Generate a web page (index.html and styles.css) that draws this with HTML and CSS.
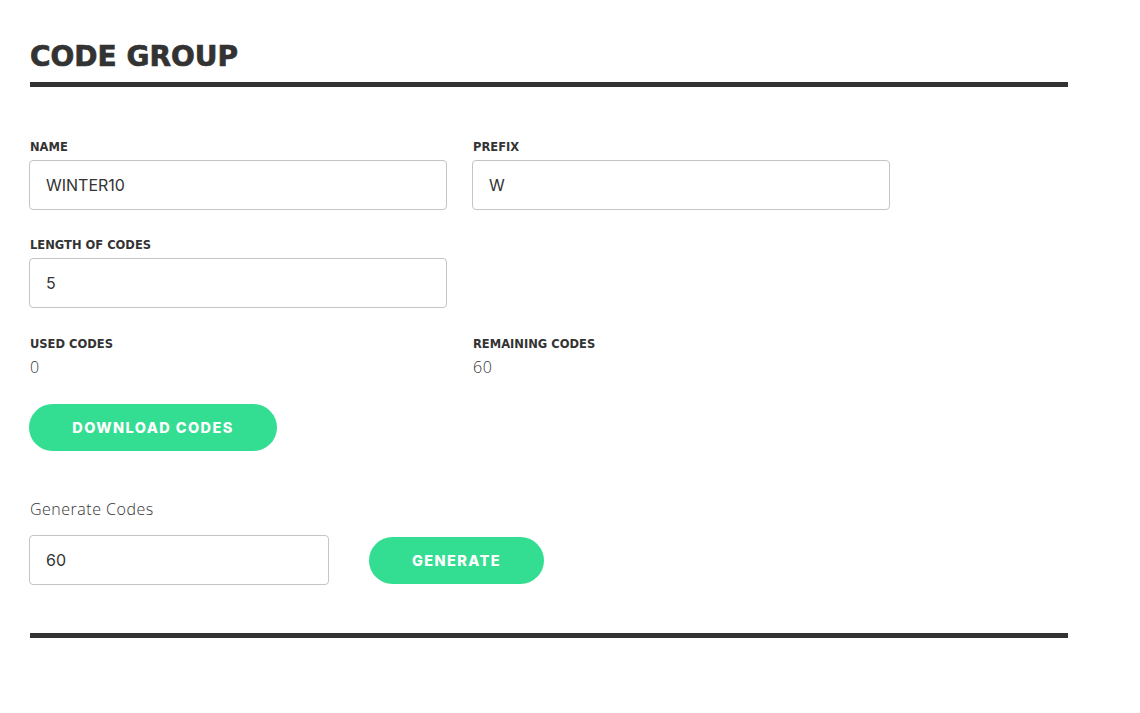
FILE: index.html
```html
<!DOCTYPE html>
<html>
<head>
<meta charset="utf-8">
<link rel="stylesheet" href="styles.css">
</head>
<body>
<div class="page">
  <h1 class="title">CODE GROUP</h1>
  <div class="rule"></div>
  <div class="form">
    <div class="grid">
      <div class="field">
        <label class="label">NAME</label>
        <div class="input">WINTER10</div>
      </div>
      <div class="field">
        <label class="label">PREFIX</label>
        <div class="input">W</div>
      </div>
      <div class="field">
        <label class="label">LENGTH OF CODES</label>
        <div class="input">5</div>
      </div>
      <div class="field"></div>
      <div class="stat">
        <div class="label">USED CODES</div>
        <div class="value">0</div>
      </div>
      <div class="stat">
        <div class="label">REMAINING CODES</div>
        <div class="value">60</div>
      </div>
    </div>
    <button class="btn btn-download">DOWNLOAD CODES</button>
    <div class="gen-title">Generate Codes</div>
    <div class="gen-row">
      <div class="input input-small">60</div>
      <button class="btn btn-generate">GENERATE</button>
    </div>
  </div>
  <div class="rule rule-bottom"></div>
</div>
</body>
</html>
```

FILE: styles.css
```css
* { box-sizing: border-box; }
body {
  margin: 0;
  background: #fff;
  color: #333;
  font-family: "Open Sans", "DejaVu Sans", sans-serif;
}
.page {
  width: 1068px;
  padding: 40px 0 0 30px;
}
.title {
  margin: 0;
  font-family: "DejaVu Sans", sans-serif;
  font-weight: 700;
  font-size: 28px;
  line-height: 34px;
  letter-spacing: 0;
  -webkit-text-stroke: 0.7px #333;
  color: #333;
}
.rule {
  height: 5px;
  background: #333;
  margin-top: 8px;
}
.form {
  padding-top: 53px;
}
.grid {
  display: grid;
  grid-template-columns: 418px 418px;
  column-gap: 25px;
  row-gap: 0;
  margin-left: -1px;
}
.field {
  padding-bottom: 28px;
}
.label {
  display: block;
  font-family: "DejaVu Sans", sans-serif;
  font-weight: 700;
  font-size: 11.5px;
  line-height: 14px;
  color: #333;
  margin-left: 1px;
  margin-bottom: 6px;
}
.input {
  height: 50px;
  border: 1px solid #c4c4c4;
  border-radius: 4px;
  padding: 0 16px;
  display: flex;
  align-items: center;
  font-family: "Inter", sans-serif;
  font-size: 16px;
  color: #333;
}
.stat {
  padding-top: 1px;
}
.stat .label {
  margin-bottom: 6px;
}
.value {
  font-family: "Open Sans", sans-serif;
  font-weight: 300;
  font-size: 16px;
  line-height: 20px;
  letter-spacing: 0.5px;
  margin-left: 1px;
  color: #333;
}
.btn {
  border: none;
  background: #33dd91;
  color: #fff;
  font-family: "Inter", sans-serif;
  font-weight: 800;
  font-size: 14.5px;
  letter-spacing: 1.4px;
  border-radius: 24px;
  height: 47px;
  cursor: pointer;
  display: block;
}
.btn-download {
  width: 248px;
  margin-top: 27px;
  margin-left: -1px;
}
.gen-title {
  margin-top: 48px;
  font-family: "Open Sans", sans-serif;
  font-weight: 300;
  font-size: 16px;
  line-height: 20px;
  letter-spacing: 0.5px;
}
.gen-row {
  display: flex;
  align-items: center;
  gap: 40px;
  margin-top: 16px;
  margin-left: -1px;
}
.input-small {
  width: 300px;
}
.btn-generate {
  width: 175px;
}
.rule-bottom {
  margin-top: 48px;
}
```
